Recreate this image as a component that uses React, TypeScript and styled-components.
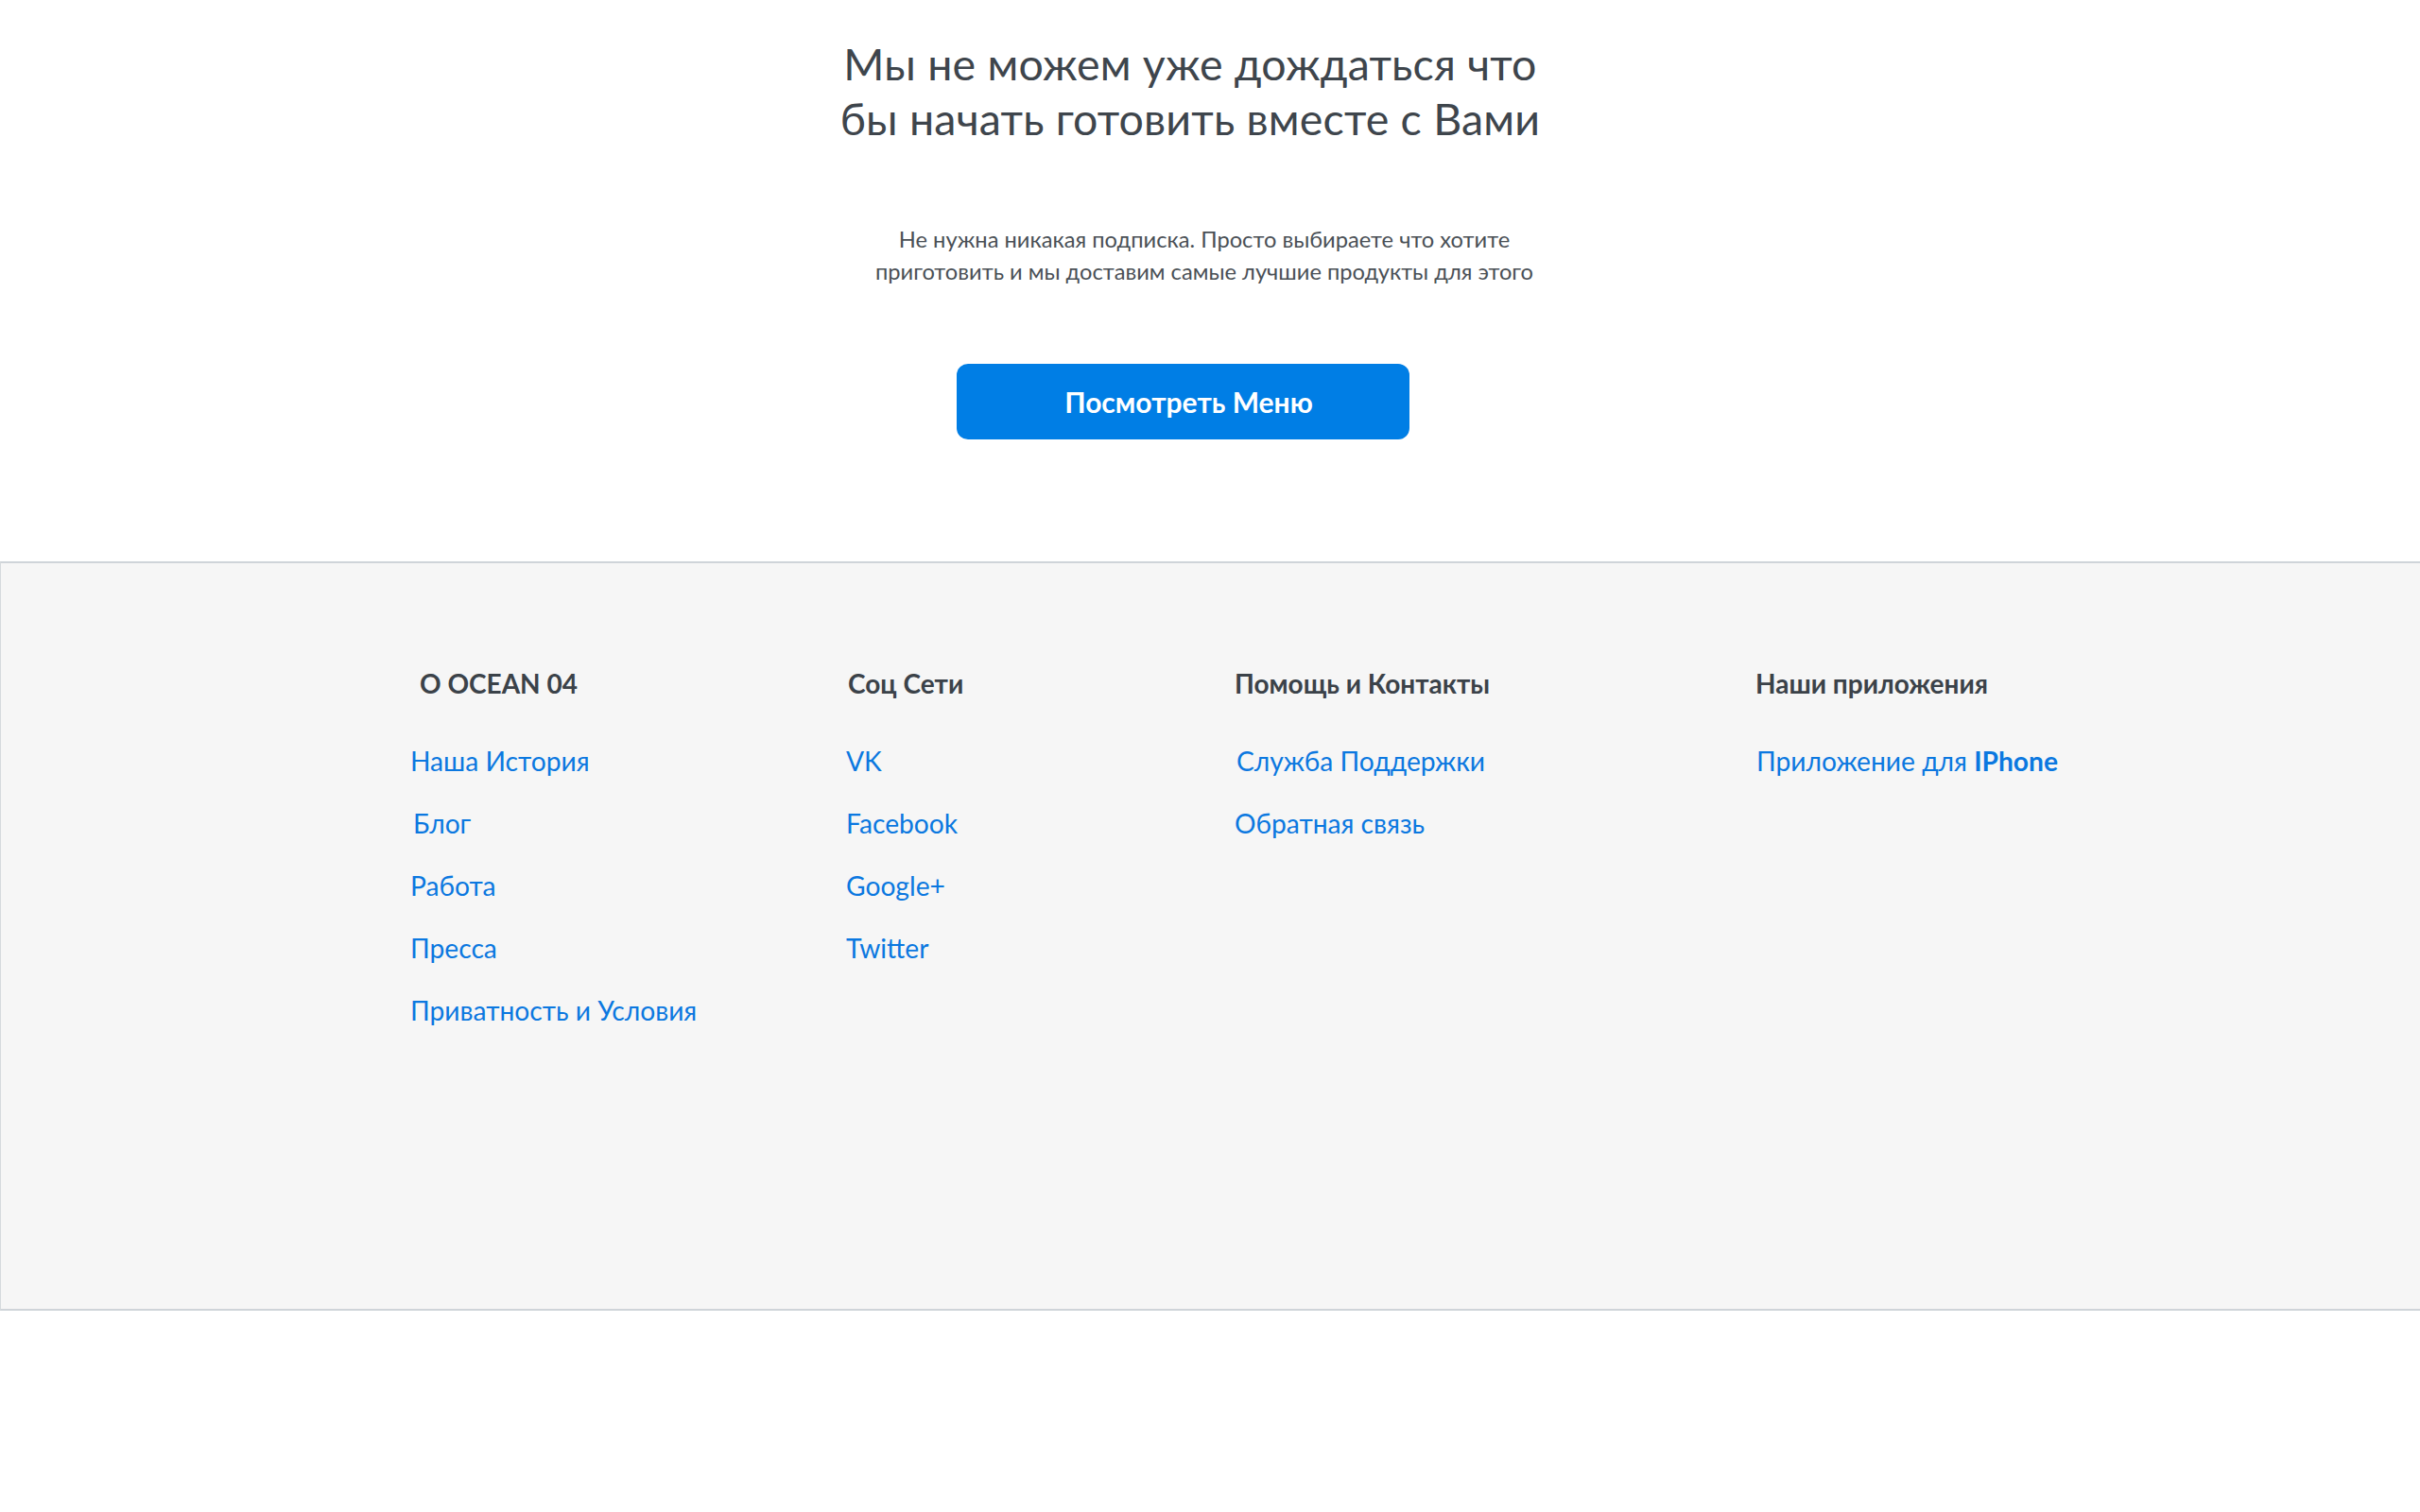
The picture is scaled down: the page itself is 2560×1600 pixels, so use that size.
import React from "react";
import styled, { createGlobalStyle } from "styled-components";

const Global = createGlobalStyle`
  html, body { margin: 0; padding: 0; background: #ffffff; }
  body { font-family: "Lato", "Noto Sans", "Open Sans", sans-serif; -webkit-font-smoothing: antialiased; }
  * { box-sizing: border-box; }
`;

const Page = styled.div`
  width: 2560px;
  min-height: 1600px;
  background: #ffffff;
`;

const Hero = styled.section`
  display: flex;
  flex-direction: column;
  align-items: center;
  padding-top: 38px;
  height: 594px;
`;

const Title = styled.h1`
  margin: 0;
  padding-right: 42px;
  font-size: 46.5px;
  line-height: 58px;
  font-weight: 400;
  color: #3e454c;
  text-align: center;
  letter-spacing: 0.2px;
`;

const Lead = styled.p`
  margin: 82px 0 0;
  padding-right: 12px;
  font-size: 23.7px;
  line-height: 34px;
  color: #4a5056;
  text-align: center;
`;

const MenuButton = styled.button`
  margin: 81px 57px 0 0;
  width: 479px;
  height: 80px;
  padding: 0 0 0 12px;
  border: none;
  border-radius: 12px;
  background: #007ee5;
  color: #ffffff;
  font-family: inherit;
  font-size: 30px;
  font-weight: 700;
  cursor: pointer;
`;

const Footer = styled.footer`
  height: 793px;
  background: #f6f6f6;
  border-top: 2px solid #cfd4d9;
  border-bottom: 2px solid #cfd4d9;
  border-left: 1px solid #d6dadd;
  display: grid;
  grid-template-columns: 461px 411px 551px 1fr;
  padding: 109px 0 0 433px;
  align-content: start;
`;

const Column = styled.div`
  display: flex;
  flex-direction: column;
`;

const ColTitle = styled.h3<{ $indent?: number }>`
  margin: 0 0 46px;
  padding-left: ${(p) => p.$indent ?? 0}px;
  font-size: 28px;
  line-height: 36px;
  font-weight: 700;
  color: #3b4249;
`;

const LinkList = styled.ul`
  list-style: none;
  margin: 0;
  padding: 0;
  display: flex;
  flex-direction: column;
  gap: 30px;
`;

const FooterLink = styled.a<{ $indent?: number }>`
  display: block;
  padding-left: ${(p) => p.$indent ?? 0}px;
  font-size: 28.2px;
  line-height: 36px;
  color: #0b78e0;
  text-decoration: none;
`;

const Strong = styled.span`
  font-weight: 700;
`;

type Item = { label: React.ReactNode; indent?: number };
type Col = { title: string; titleIndent?: number; items: Item[] };

const columns: Col[] = [
  {
    title: "O OCEAN 04",
    titleIndent: 10,
    items: [
      { label: "Наша История" },
      { label: "Блог", indent: 3 },
      { label: "Работа" },
      { label: "Пресса" },
      { label: "Приватность и Условия" },
    ],
  },
  {
    title: "Соц Сети",
    titleIndent: 2,
    items: [{ label: "VK" }, { label: "Facebook" }, { label: "Google+" }, { label: "Twitter" }],
  },
  {
    title: "Помощь и Контакты",
    items: [{ label: "Служба Поддержки", indent: 2 }, { label: "Обратная связь" }],
  },
  {
    title: "Наши приложения",
    items: [
      {
        label: (
          <>
            Приложение для <Strong>IPhone</Strong>
          </>
        ),
        indent: 1,
      },
    ],
  },
];

export default function App() {
  return (
    <Page>
      <Global />
      <Hero>
        <Title>
          Мы не можем уже дождаться что
          <br />
          бы начать готовить вместе с Вами
        </Title>
        <Lead>
          Не нужна никакая подписка. Просто выбираете что хотите
          <br />
          приготовить и мы доставим самые лучшие продукты для этого
        </Lead>
        <MenuButton>Посмотреть Меню</MenuButton>
      </Hero>
      <Footer>
        {columns.map((c) => (
          <Column key={c.title}>
            <ColTitle $indent={c.titleIndent}>{c.title}</ColTitle>
            <LinkList>
              {c.items.map((it, i) => (
                <li key={i}>
                  <FooterLink href="#" $indent={it.indent}>
                    {it.label}
                  </FooterLink>
                </li>
              ))}
            </LinkList>
          </Column>
        ))}
      </Footer>
    </Page>
  );
}
